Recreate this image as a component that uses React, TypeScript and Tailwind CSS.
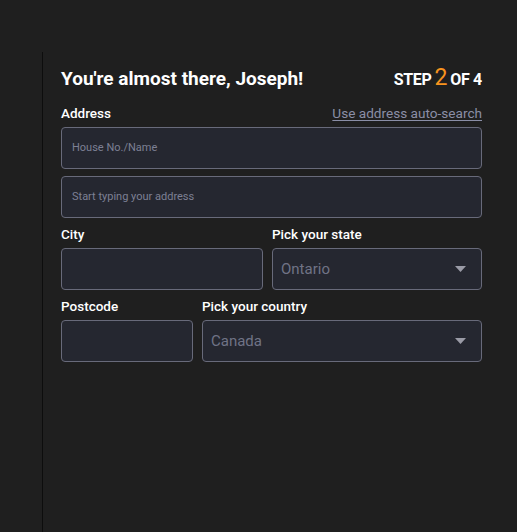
function Caret() {
  return (
    <svg width="11" height="6" viewBox="0 0 11 6" className="shrink-0">
      <path d="M0 0h11L5.5 6z" fill="#9a9ba6" />
    </svg>
  );
}

function TextBox({ placeholder, className = "" }: { placeholder?: string; className?: string }) {
  return (
    <div
      className={`h-[42px] rounded-[4px] border border-[#686a7a] bg-[#252730] px-[10px] flex items-center text-[11px] text-[#7d8094] ${className}`}
    >
      {placeholder}
    </div>
  );
}

function SelectBox({ value }: { value: string }) {
  return (
    <div className="h-[42px] rounded-[4px] border border-[#686a7a] bg-[#252730] pl-[8px] pr-[15px] flex items-center justify-between text-[15px] text-[#707386]">
      <span>{value}</span>
      <Caret />
    </div>
  );
}

function Label({ children }: { children: string }) {
  return <div className="text-[13.5px] font-medium text-white leading-[16px] mb-[6px]">{children}</div>;
}

export default function App() {
  return (
    <div className="w-[517px] h-[532px] bg-[#1f1f1f] flex font-['Roboto',sans-serif]">
      <div className="w-[42px]" />
      <div className="mt-[52px] flex-1 border-l border-[#0d0d0d] pl-[18px] pr-[35px]">
        <div className="flex items-center justify-between h-[22px] mt-[16px]">
          <h1 className="text-[19px] font-bold text-white">You're almost there, Joseph!</h1>
          <div className="flex items-baseline text-[16px] font-bold text-white tracking-[-0.3px]">
            STEP
            <span className="mx-[3px] text-[23px] font-normal text-[#f7931e] leading-none">2</span>
            OF 4
          </div>
        </div>

        <div className="mt-[15px] flex items-end justify-between">
          <Label>Address</Label>
          <a className="text-[13.6px] text-[#8a8ea6] underline underline-offset-2 leading-[16px] mb-[6px]">
            Use address auto-search
          </a>
        </div>
        <TextBox placeholder="House No./Name" />
        <TextBox placeholder="Start typing your address" className="mt-[7px]" />

        <div className="mt-[8px] grid grid-cols-[202px_1fr] gap-[9px]">
          <div>
            <Label>City</Label>
            <TextBox />
          </div>
          <div>
            <Label>Pick your state</Label>
            <SelectBox value="Ontario" />
          </div>
        </div>

        <div className="mt-[8px] grid grid-cols-[132px_1fr] gap-[9px]">
          <div>
            <Label>Postcode</Label>
            <TextBox />
          </div>
          <div>
            <Label>Pick your country</Label>
            <SelectBox value="Canada" />
          </div>
        </div>
      </div>
    </div>
  );
}
